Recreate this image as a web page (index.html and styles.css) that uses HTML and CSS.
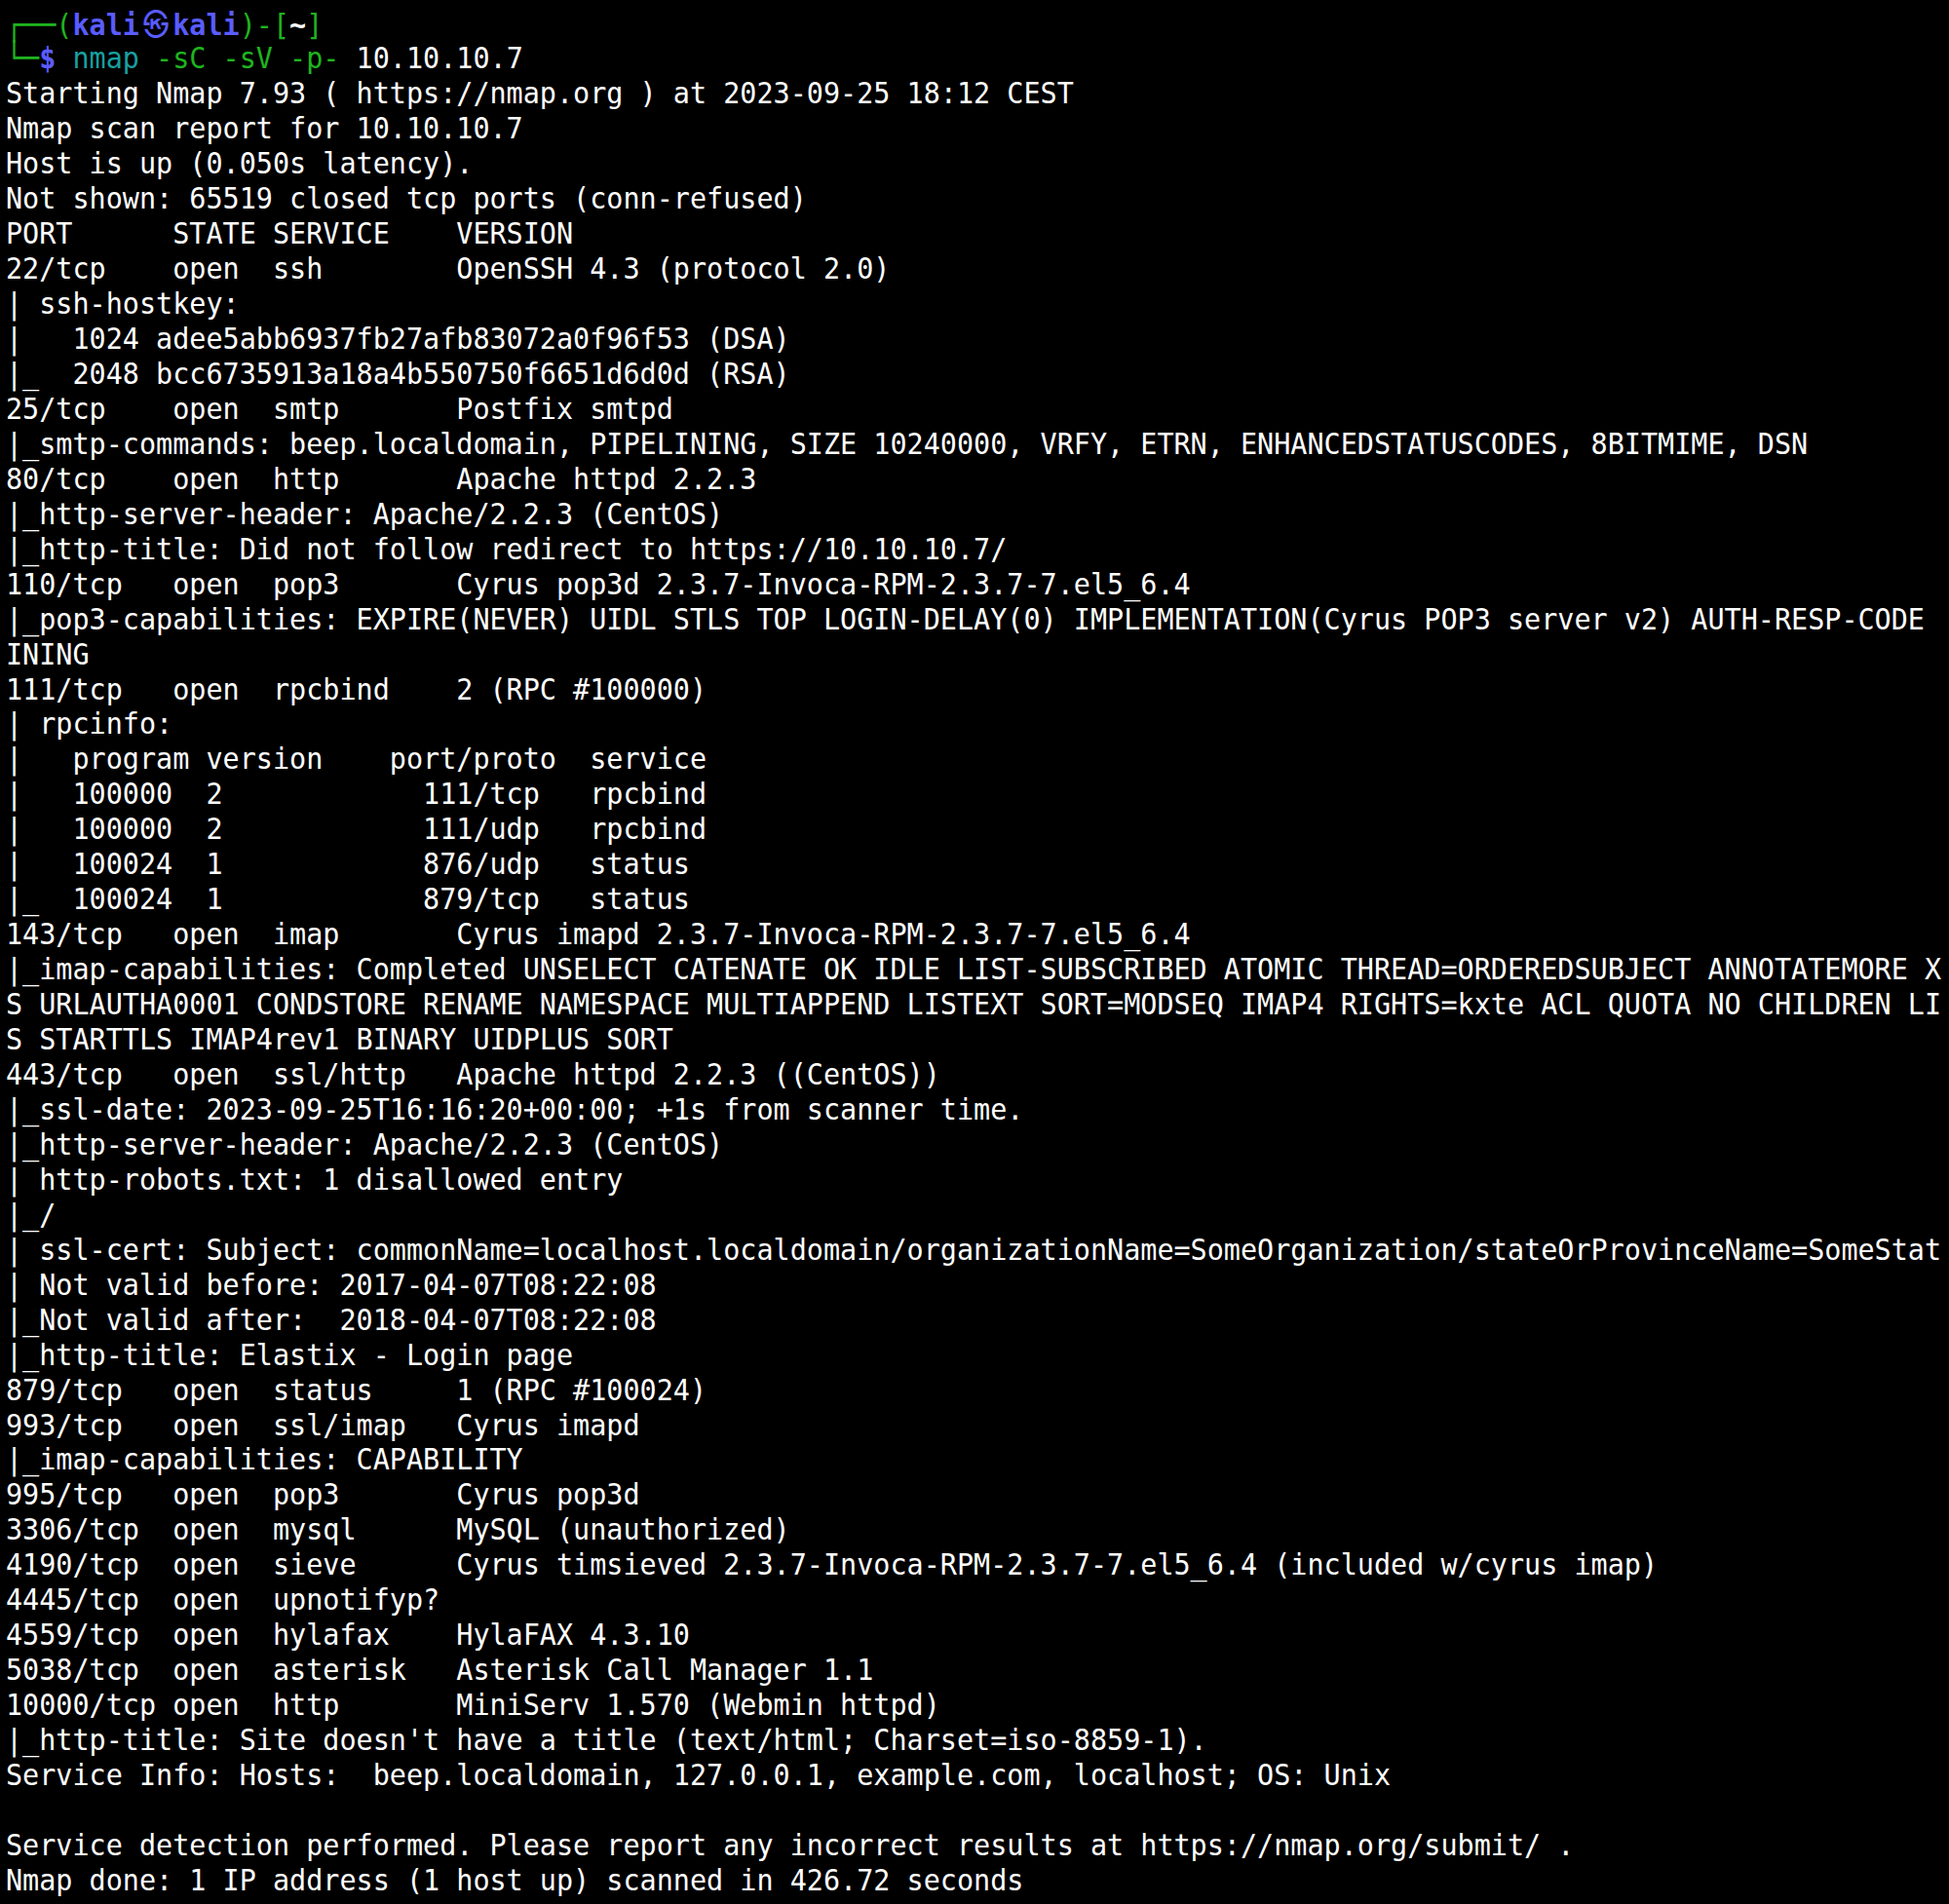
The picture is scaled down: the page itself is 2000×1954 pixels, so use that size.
FILE: index.html
```html
<!DOCTYPE html>
<html lang="en">
<head>
<meta charset="utf-8">
<title>nmap -sC -sV -p- 10.10.10.7</title>
<link rel="stylesheet" href="styles.css">
</head>
<body>
<div class="screen">
<main class="terminal">
<div class="line"><span class="g">┌──(</span><span class="b">kali<span class="sym">㉿</span>kali</span><span class="g">)-[</span><span class="w">~</span><span class="g">]</span></div>
<div class="line"><span class="g">└─</span><span class="b">$</span> <span class="c">nmap</span> <span class="g">-sC -sV -p-</span> 10.10.10.7</div>
<div class="line">Starting Nmap 7.93 ( https://nmap.org ) at 2023-09-25 18:12 CEST</div>
<div class="line">Nmap scan report for 10.10.10.7</div>
<div class="line">Host is up (0.050s latency).</div>
<div class="line">Not shown: 65519 closed tcp ports (conn-refused)</div>
<div class="line">PORT      STATE SERVICE    VERSION</div>
<div class="line">22/tcp    open  ssh        OpenSSH 4.3 (protocol 2.0)</div>
<div class="line">| ssh-hostkey: </div>
<div class="line">|   1024 adee5abb6937fb27afb83072a0f96f53 (DSA)</div>
<div class="line">|_  2048 bcc6735913a18a4b550750f6651d6d0d (RSA)</div>
<div class="line">25/tcp    open  smtp       Postfix smtpd</div>
<div class="line">|_smtp-commands: beep.localdomain, PIPELINING, SIZE 10240000, VRFY, ETRN, ENHANCEDSTATUSCODES, 8BITMIME, DSN</div>
<div class="line">80/tcp    open  http       Apache httpd 2.2.3</div>
<div class="line">|_http-server-header: Apache/2.2.3 (CentOS)</div>
<div class="line">|_http-title: Did not follow redirect to https://10.10.10.7/</div>
<div class="line">110/tcp   open  pop3       Cyrus pop3d 2.3.7-Invoca-RPM-2.3.7-7.el5_6.4</div>
<div class="line">|_pop3-capabilities: EXPIRE(NEVER) UIDL STLS TOP LOGIN-DELAY(0) IMPLEMENTATION(Cyrus POP3 server v2) AUTH-RESP-CODE</div>
<div class="line">INING</div>
<div class="line">111/tcp   open  rpcbind    2 (RPC #100000)</div>
<div class="line">| rpcinfo: </div>
<div class="line">|   program version    port/proto  service</div>
<div class="line">|   100000  2            111/tcp   rpcbind</div>
<div class="line">|   100000  2            111/udp   rpcbind</div>
<div class="line">|   100024  1            876/udp   status</div>
<div class="line">|_  100024  1            879/tcp   status</div>
<div class="line">143/tcp   open  imap       Cyrus imapd 2.3.7-Invoca-RPM-2.3.7-7.el5_6.4</div>
<div class="line">|_imap-capabilities: Completed UNSELECT CATENATE OK IDLE LIST-SUBSCRIBED ATOMIC THREAD=ORDEREDSUBJECT ANNOTATEMORE X</div>
<div class="line">S URLAUTHA0001 CONDSTORE RENAME NAMESPACE MULTIAPPEND LISTEXT SORT=MODSEQ IMAP4 RIGHTS=kxte ACL QUOTA NO CHILDREN LI</div>
<div class="line">S STARTTLS IMAP4rev1 BINARY UIDPLUS SORT</div>
<div class="line">443/tcp   open  ssl/http   Apache httpd 2.2.3 ((CentOS))</div>
<div class="line">|_ssl-date: 2023-09-25T16:16:20+00:00; +1s from scanner time.</div>
<div class="line">|_http-server-header: Apache/2.2.3 (CentOS)</div>
<div class="line">| http-robots.txt: 1 disallowed entry </div>
<div class="line">|_/</div>
<div class="line">| ssl-cert: Subject: commonName=localhost.localdomain/organizationName=SomeOrganization/stateOrProvinceName=SomeStat</div>
<div class="line">| Not valid before: 2017-04-07T08:22:08</div>
<div class="line">|_Not valid after:  2018-04-07T08:22:08</div>
<div class="line">|_http-title: Elastix - Login page</div>
<div class="line">879/tcp   open  status     1 (RPC #100024)</div>
<div class="line">993/tcp   open  ssl/imap   Cyrus imapd</div>
<div class="line">|_imap-capabilities: CAPABILITY</div>
<div class="line">995/tcp   open  pop3       Cyrus pop3d</div>
<div class="line">3306/tcp  open  mysql      MySQL (unauthorized)</div>
<div class="line">4190/tcp  open  sieve      Cyrus timsieved 2.3.7-Invoca-RPM-2.3.7-7.el5_6.4 (included w/cyrus imap)</div>
<div class="line">4445/tcp  open  upnotifyp?</div>
<div class="line">4559/tcp  open  hylafax    HylaFAX 4.3.10</div>
<div class="line">5038/tcp  open  asterisk   Asterisk Call Manager 1.1</div>
<div class="line">10000/tcp open  http       MiniServ 1.570 (Webmin httpd)</div>
<div class="line">|_http-title: Site doesn't have a title (text/html; Charset=iso-8859-1).</div>
<div class="line">Service Info: Hosts:  beep.localdomain, 127.0.0.1, example.com, localhost; OS: Unix</div>
<div class="line"> </div>
<div class="line">Service detection performed. Please report any incorrect results at https://nmap.org/submit/ .</div>
<div class="line">Nmap done: 1 IP address (1 host up) scanned in 426.72 seconds</div>
</main>
</div>
</body>
</html>
```

FILE: styles.css
```css
html, body {
  margin: 0;
  padding: 0;
  background: #000000;
}

body {
  width: 2000px;
  height: 1954px;
  overflow: hidden;
}

.screen {
  width: 2000px;
  height: 1954px;
  overflow: hidden;
}

.terminal {
  display: flex;
  flex-direction: column;
  padding: 6.4px 0 0 6.5px;
  width: 2175px;
  box-sizing: border-box;
  overflow: hidden;
  color: #ffffff;
  font-family: "DejaVu Sans Mono", "Liberation Mono", monospace;
  font-size: 31px;
  letter-spacing: 0;
  line-height: 35.96px;
  transform: scaleX(0.9174);
  transform-origin: 0 0;
}

.line {
  white-space: pre;
  height: 35.96px;
}

.g { color: #1fb41f; }
.b { color: #5a5cff; font-weight: bold; }
.c { color: #17a1a1; }
.w { color: #ffffff; font-weight: bold; }

.sym {
  display: inline-block;
  width: 37.32px;
  text-align: center;
  font-family: "Noto Sans CJK KR", "DejaVu Sans", sans-serif;
  font-size: 29px;
  font-weight: normal;
}
```
